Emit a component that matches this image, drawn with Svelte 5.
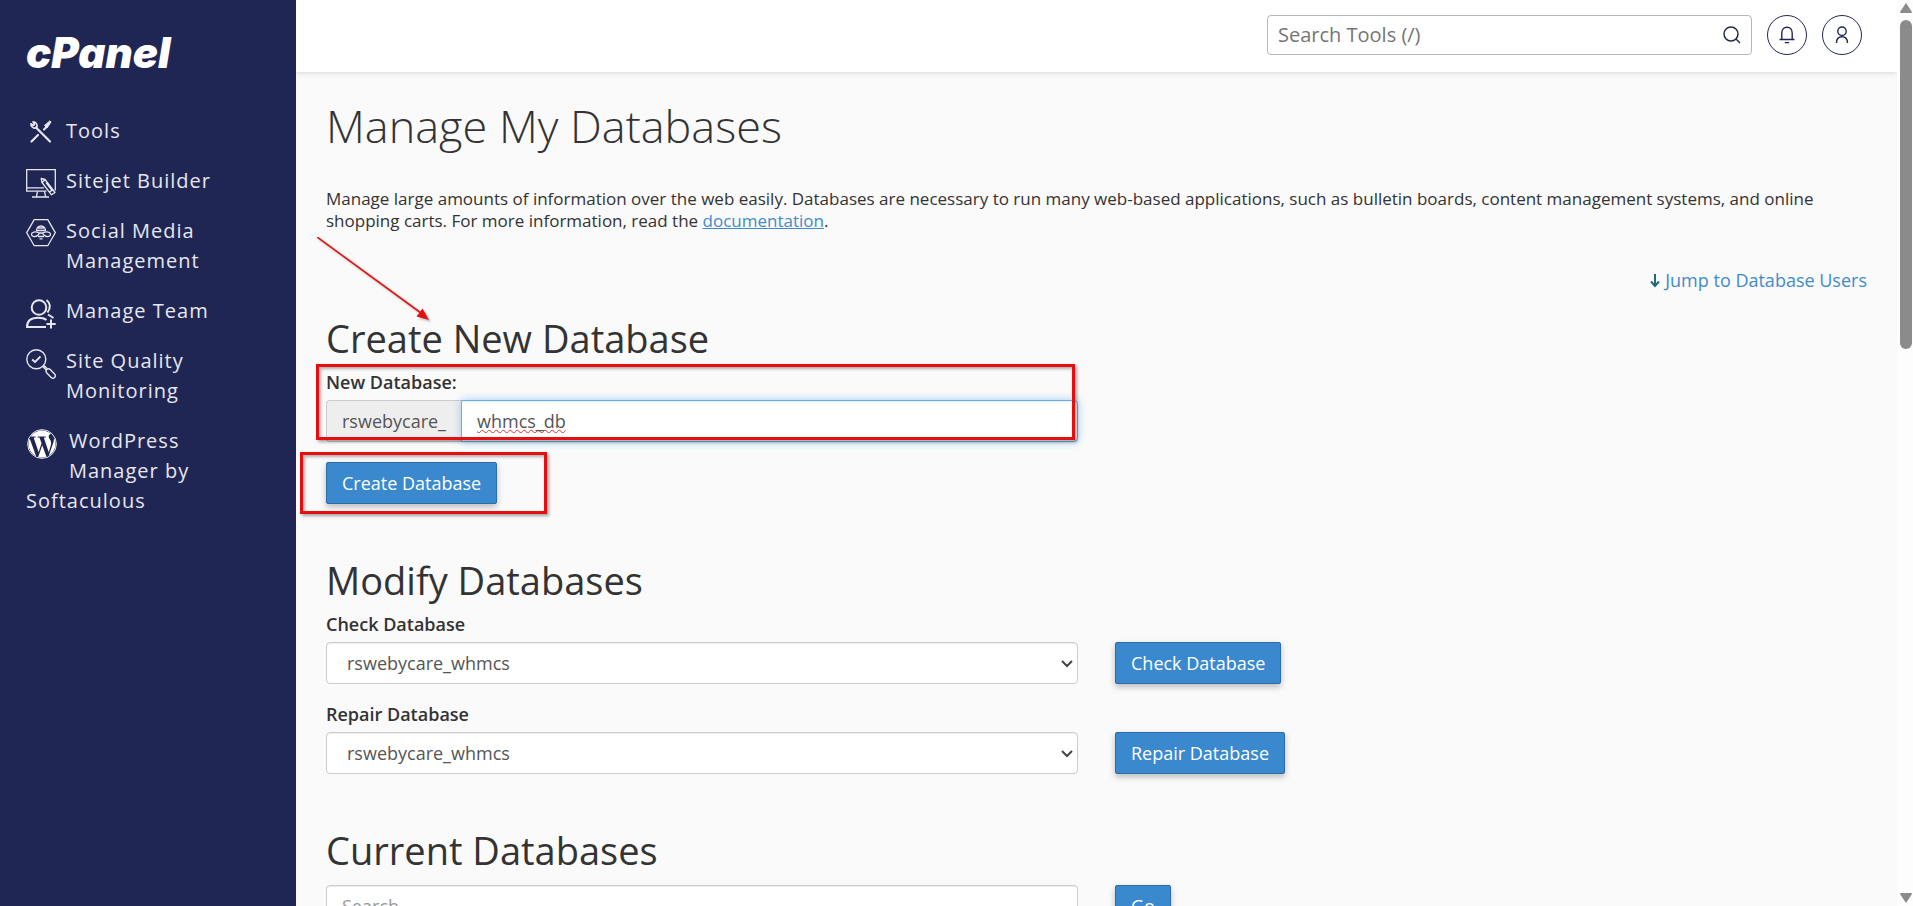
<script lang="ts">
  interface NavItem { label: string; icon: string; }

  const navItems: NavItem[] = [
    { label: 'Tools', icon: 'tools' },
    { label: 'Sitejet Builder', icon: 'sitejet' },
    { label: 'Social Media Management', icon: 'social' },
    { label: 'Manage Team', icon: 'team' },
    { label: 'Site Quality Monitoring', icon: 'quality' },
    { label: 'WordPress Manager by Softaculous', icon: 'wordpress' },
  ];
  const databases = ['rswebycare_whmcs'];
  const actions = ['Check Database', 'Repair Database'];

  let newDatabase = $state('whmcs_db');
  let search = $state('');
  let toolSearch = $state('');
</script>

<div class="page">
  <aside class="sidebar">
    <a class="logo" href="#home">cPanel</a>
    <nav>
      <ul>
        {#each navItems as item}
          <li>
            <a href="#{item.icon}">
              {#if item.icon === 'tools'}
                <svg class="icon" viewBox="0 0 30 30">
                  <g fill="none" stroke="currentColor" stroke-width="2.2" stroke-linecap="round">
                    <path d="M10 8.500L24 22.500M5.500 22.500L12 16" />
                    <path d="M18 10.500L21 7.500" />
                    <path d="M7 2.800A4 4 0 0 1 10.600 8.600A4 4 0 0 1 4.800 4.800L7.500 6.500L8.500 5.500Z" stroke-width="1.600" stroke-linejoin="round" />
                  </g>
                  <path d="M18.500 6.500L24 1.800L25 3L21 9Z" fill="currentColor" stroke="currentColor" stroke-linejoin="round" />
                </svg>
              {:else if item.icon === 'sitejet'}
                <svg class="icon" viewBox="0 0 30 30" fill="none" stroke="currentColor" stroke-width="1.300">
                  <path d="M20.500 22.200H.700V.700H29.300V21.500M.700 18.800H18" />
                  <path d="M11.500 22.500L10.500 27.300M18.500 22.500L19.500 27.300M6 28H23" />
                  <path d="M15.200 9.500L19 10.500L29 23.500L25.500 25.800L16 13.500ZM16.200 13.500L19 10.800M23.500 23L27 20.500M20 13.500L26.500 22" stroke-linejoin="round" />
                </svg>
              {:else if item.icon === 'social'}
                <svg class="icon" viewBox="0 0 30 30" fill="none" stroke="currentColor" stroke-width="1.300">
                  <path d="M8.200 .700H21.800L29.300 13.700L21.800 26.700H8.200L.700 13.700Z" />
                  <path d="M10.500 11.500A4.500 4.500 0 0 1 19.500 11.500ZM12 9H18" />
                  <path d="M13.500 14C9 12 5.500 13 5.500 15.200C5.500 18.500 11 19 13.500 14ZM16.500 14C21 12 24.500 13 24.500 15.200C24.500 18.500 19 19 16.500 14Z" />
                  <path d="M12 17.500H18M13.500 19.800H16.500M13.500 14H16.500" />
                </svg>
              {:else if item.icon === 'team'}
                <svg class="icon" viewBox="0 0 30 30" fill="none" stroke="currentColor" stroke-width="2">
                  <circle cx="13" cy="8.500" r="7.300" />
                  <path d="M20.500 1C24.500 4 25 9 21.500 13.500M22 15.500L27.500 19" />
                  <path d="M20 28H1C1 22 5 18.800 12 18.800C15.500 18.800 18.500 19.500 20.500 21M25 20.500V29.500M20.500 25H29.700" />
                </svg>
              {:else if item.icon === 'quality'}
                <svg class="icon" viewBox="0 0 30 30" fill="none" stroke="currentColor" stroke-width="1.400">
                  <circle cx="10.300" cy="10.300" r="9.500" />
                  <path d="M6.200 10.500L9 13L14.500 7.500" stroke-width="1.800" />
                  <path d="M16.800 17.500L20 20.800M18 16.500L21.300 19.700" />
                  <rect x="-2.400" y="-5.500" width="4.800" height="11" rx="2.400" transform="translate(24.700 24.500) rotate(-45)" />
                </svg>
              {:else}
                <svg class="icon wordpress" viewBox="0 0 24 24" fill="currentColor">
                  <circle cx="12" cy="12" r="11.500" fill="none" stroke="currentColor" stroke-width=".700" />
                  <path d="M21.469 6.825c.84 1.537 1.318 3.3 1.318 5.175 0 3.979-2.156 7.456-5.363 9.325l3.295-9.527c.615-1.54.82-2.771.82-3.864 0-.405-.026-.78-.07-1.11m-7.981.105c.647-.03 1.232-.105 1.232-.105.582-.075.514-.93-.067-.899 0 0-1.755.135-2.88.135-1.064 0-2.85-.15-2.85-.15-.585-.03-.661.855-.075.885 0 0 .54.061 1.125.09l1.68 4.605-2.37 7.08L5.354 6.9c.649-.03 1.234-.1 1.234-.1.585-.075.516-.93-.065-.896 0 0-1.746.138-2.874.138-.2 0-.438-.008-.69-.015C4.911 3.15 8.235 1.215 12 1.215c2.809 0 5.365 1.072 7.286 2.833-.046-.003-.091-.009-.141-.009-1.06 0-1.812.923-1.812 1.914 0 .89.513 1.643 1.06 2.531.411.72.89 1.643.89 2.977 0 .915-.354 1.994-.821 3.479l-1.075 3.585-3.9-11.61zM12 22.784c-1.059 0-2.081-.153-3.048-.437l3.237-9.406 3.315 9.087c.024.053.05.101.078.149-1.12.393-2.325.609-3.582.609M1.211 12c0-1.564.336-3.05.935-4.39L7.29 21.709C3.694 19.96 1.212 16.271 1.211 12" />
                </svg>
              {/if}
              {item.label}
            </a>
          </li>
        {/each}
      </ul>
    </nav>
  </aside>

  <div class="body">
    <header class="topbar">
      <form class="tool-search" role="search">
        <input type="search" aria-label="Search Tools" placeholder="Search Tools (/)" bind:value={toolSearch} />
        <button type="button" aria-label="Search">
          <svg width="18" height="18" viewBox="0 0 18 18" fill="none" stroke="currentColor" stroke-width="1.500">
            <circle cx="8" cy="8" r="7" />
            <path d="M13 13L17 17" />
          </svg>
        </button>
      </form>
      <button class="round" type="button" aria-label="Notifications">
        <svg width="18" height="18" viewBox="0 0 18 18" fill="none" stroke="currentColor" stroke-width="1.400">
          <path d="M1.500 13.500H16.500M3.800 13.500V7C3.800 3.500 6 1.200 9 1.200S14.200 3.500 14.200 7V13.500M6.800 16.600H11.200" />
        </svg>
      </button>
      <button class="round" type="button" aria-label="Account">
        <svg width="18" height="18" viewBox="0 0 18 18" fill="none" stroke="currentColor" stroke-width="1.400">
          <circle cx="9" cy="5.200" r="4.200" />
          <path d="M3.500 17C3.500 12.800 5.800 10.800 9 10.800S14.500 12.800 14.500 17" />
        </svg>
      </button>
    </header>

    <main>
      <h1>Manage My Databases</h1>
      <p class="intro">
        Manage large amounts of information over the web easily. Databases are necessary to run many web-based applications, such as bulletin boards, content management systems, and online shopping carts. For more information, read the <a href="#documentation">documentation</a>.
      </p>
      <a class="jump" href="#users">
        <svg width="10" height="16" viewBox="0 0 10 16" fill="none" stroke="#1f6b78" stroke-width="2">
          <path d="M5 2V14M1 9.500L5 14L9 9.500" />
        </svg>
        Jump to Database Users
      </a>

      <section class="create">
        <svg class="arrow" width="120" height="90" viewBox="0 0 120 90">
          <path d="M0 0L104 76" stroke="#e60f10" stroke-width="1.600" />
          <path d="M112 83L99.500 79.500L105.500 71.500Z" fill="#e60f10" />
        </svg>
        <h2>Create New Database</h2>
        <div class="columns">
          <div class="field marked">
            <label for="new-db">New Database:</label>
            <div class="input-group">
              <span class="addon">rswebycare_</span>
              <input id="new-db" type="text" bind:value={newDatabase} />
            </div>
          </div>
        </div>
        <div class="submit marked">
          <button class="btn" type="button">Create Database</button>
        </div>
      </section>

      <section>
        <h2>Modify Databases</h2>
        {#each actions as action, i}
          <div class="columns">
            <div class="field">
              <label for="db-{i}">{action}</label>
              <div class="select">
                <select id="db-{i}">
                  {#each databases as db}
                    <option>{db}</option>
                  {/each}
                </select>
                <svg width="12" height="8" viewBox="0 0 12 8" fill="none" stroke="#444" stroke-width="2">
                  <path d="M1 1L6 6L11 1" />
                </svg>
              </div>
            </div>
            <button class="btn" type="button">{action}</button>
          </div>
        {/each}
      </section>

      <section>
        <h2>Current Databases</h2>
        <div class="columns search-row">
          <input type="text" aria-label="Search" placeholder="Search" bind:value={search} />
          <button class="btn" type="button">Go</button>
        </div>
      </section>
    </main>
  </div>

  <div class="scrollbar">
    <svg width="12" height="10" viewBox="0 0 12 10"><path d="M6 0L12 9Q12 10 11 10H1Q0 10 0 9Z" fill="#8b8b8b" /></svg>
    <div class="track"><div class="thumb"></div></div>
    <svg width="12" height="10" viewBox="0 0 12 10"><path d="M6 10L12 1Q12 0 11 0H1Q0 0 0 1Z" fill="#8b8b8b" /></svg>
  </div>
</div>

<style>
  :global(body) {
    overflow: hidden;
    background: #fafafa;
  }
  .page {
    display: grid;
    grid-template-columns: 296px 1fr 16px;
    grid-template-rows: 100vh;
    overflow: hidden;
    font-family: 'Open Sans', sans-serif;
    font-size: 18px;
    line-height: 22px;
    color: #333;
  }
  input, select, button {
    font: inherit;
    box-sizing: border-box;
    margin: 0;
  }

  /* sidebar */
  .sidebar {
    background: #202653;
    padding: 32px 46px 0 26px;
  }
  .logo {
    display: block;
    font-family: Inter, sans-serif;
    font-size: 42px;
    font-weight: 900;
    font-style: italic;
    line-height: 42px;
    color: #fff;
    text-decoration: none;
  }
  nav ul {
    list-style: none;
    margin: 42px 0 0;
    padding: 0;
  }
  nav li { margin-bottom: 20px; }
  nav a {
    display: block;
    font-size: 20px;
    line-height: 30px;
    letter-spacing: 1px;
    color: #e6e7ef;
    text-decoration: none;
  }
  .icon {
    float: left;
    width: 30px;
    height: 30px;
    margin: 3px 10px 0 0;
  }
  .wordpress {
    width: 32px;
    margin-right: 11px;
    color: #fff;
  }

  /* top bar */
  .body {
    min-width: 0;
    display: flex;
    flex-direction: column;
    overflow: hidden;
    background: #fafafa;
  }
  .topbar {
    display: flex;
    justify-content: flex-end;
    align-items: center;
    gap: 15px;
    height: 72px;
    flex-shrink: 0;
    padding: 0 35px;
    box-sizing: border-box;
    background: #fff;
    box-shadow: 0 1px 5px rgba(0, 0, 0, 0.14);
  }
  .tool-search {
    display: flex;
    width: 485px;
    height: 40px;
    margin-bottom: 2px;
    box-sizing: border-box;
    border: 1px solid #b4b7c2;
    border-radius: 4px;
    background: #fff;
  }
  .tool-search input {
    flex: 1;
    min-width: 0;
    padding: 0 10px;
    border: 0;
    background: none;
    font-size: 20px;
    outline: none;
  }
  .tool-search input::placeholder { color: #757575; }
  .tool-search button {
    display: flex;
    align-items: center;
    padding: 0 10px;
    border: 0;
    background: none;
    color: #222b40;
  }
  .round {
    display: flex;
    align-items: center;
    justify-content: center;
    width: 40px;
    height: 40px;
    margin-bottom: 2px;
    padding: 0;
    border: 1px solid #202653;
    border-radius: 50%;
    background: #fff;
    color: #202653;
  }

  /* content */
  main {
    display: flex;
    flex-direction: column;
    padding: 29px 30px 0;
  }
  h1 {
    margin: 0 0 37px;
    font-size: 45px;
    font-weight: 300;
    line-height: 50px;
  }
  .intro {
    margin: 0;
    font-size: 17px;
  }
  .intro a, .jump { color: #428bca; }
  .jump {
    align-self: flex-end;
    display: flex;
    align-items: center;
    gap: 5px;
    margin: 37px 0 26px;
    text-decoration: none;
  }
  section {
    position: relative;
    margin-bottom: 55px;
  }
  h2 {
    margin: 0 0 11px;
    font-size: 38px;
    font-weight: 400;
    line-height: 42px;
  }
  .columns {
    display: grid;
    grid-template-columns: 1fr 1fr;
    gap: 37px;
    align-items: end;
  }
  .columns + .columns { margin-top: 18px; }
  .search-row { margin-top: 14px; }
  .field label {
    display: block;
    margin-bottom: 6px;
    font-weight: 600;
    line-height: 24px;
  }
  .columns input, select {
    width: 100%;
    height: 42px;
    padding: 0 15px;
    border: 1px solid #ccc;
    border-radius: 4px;
    background: #fff;
    box-shadow: inset 0 1px 1px rgba(0, 0, 0, 0.075);
    color: #555;
  }
  .columns input::placeholder { color: #999; }
  .input-group { display: flex; }
  .addon {
    height: 42px;
    padding: 0 15px;
    box-sizing: border-box;
    border: 1px solid #ccc;
    border-right: 0;
    border-radius: 4px 0 0 4px;
    background: #eee;
    line-height: 40px;
    color: #555;
  }
  .input-group input {
    flex: 1;
    min-width: 0;
    border-color: #66afe9;
    border-radius: 0 4px 4px 0;
    box-shadow: inset 0 1px 1px rgba(0, 0, 0, 0.075), 0 0 8px rgba(102, 175, 233, 0.6);
    outline: none;
    text-decoration: underline wavy #d93030 1px;
    text-decoration-skip-ink: none;
  }
  .select { position: relative; }
  select {
    display: block;
    appearance: none;
    padding-left: 20px;
  }
  .select svg {
    position: absolute;
    right: 5px;
    top: 18px;
    pointer-events: none;
  }
  .btn {
    justify-self: start;
    height: 42px;
    padding: 0 15px;
    border: 1px solid #2a6da8;
    border-radius: 2px;
    background: #3a89cf;
    box-shadow: 0 3px 6px rgba(0, 0, 0, 0.25);
    color: #fff;
  }
  .submit {
    width: fit-content;
    margin-top: 20px;
  }

  /* red call-outs */
  .marked { position: relative; }
  .marked::after {
    content: '';
    position: absolute;
    border: 3px solid #e60f10;
    box-shadow: 2px 2px 3px rgba(0, 0, 0, 0.35), inset 2px 2px 3px rgba(0, 0, 0, 0.3);
    pointer-events: none;
  }
  .field.marked::after { inset: -6px 3px 2px -10px; }
  .submit.marked::after { inset: -10px -50px -10px -26px; }
  .arrow {
    position: absolute;
    left: -9px;
    top: -80px;
    filter: drop-shadow(2px 2px 1px rgba(0, 0, 0, 0.25));
  }

  /* page scrollbar */
  .scrollbar {
    display: flex;
    flex-direction: column;
    align-items: flex-end;
    gap: 7px;
    padding: 3px 1px 3px 0;
    background: #fdfdfd;
  }
  .track { flex: 1; }
  .thumb {
    width: 12px;
    height: 38%;
    border-radius: 6px;
    background: #8b8b8b;
  }
</style>
